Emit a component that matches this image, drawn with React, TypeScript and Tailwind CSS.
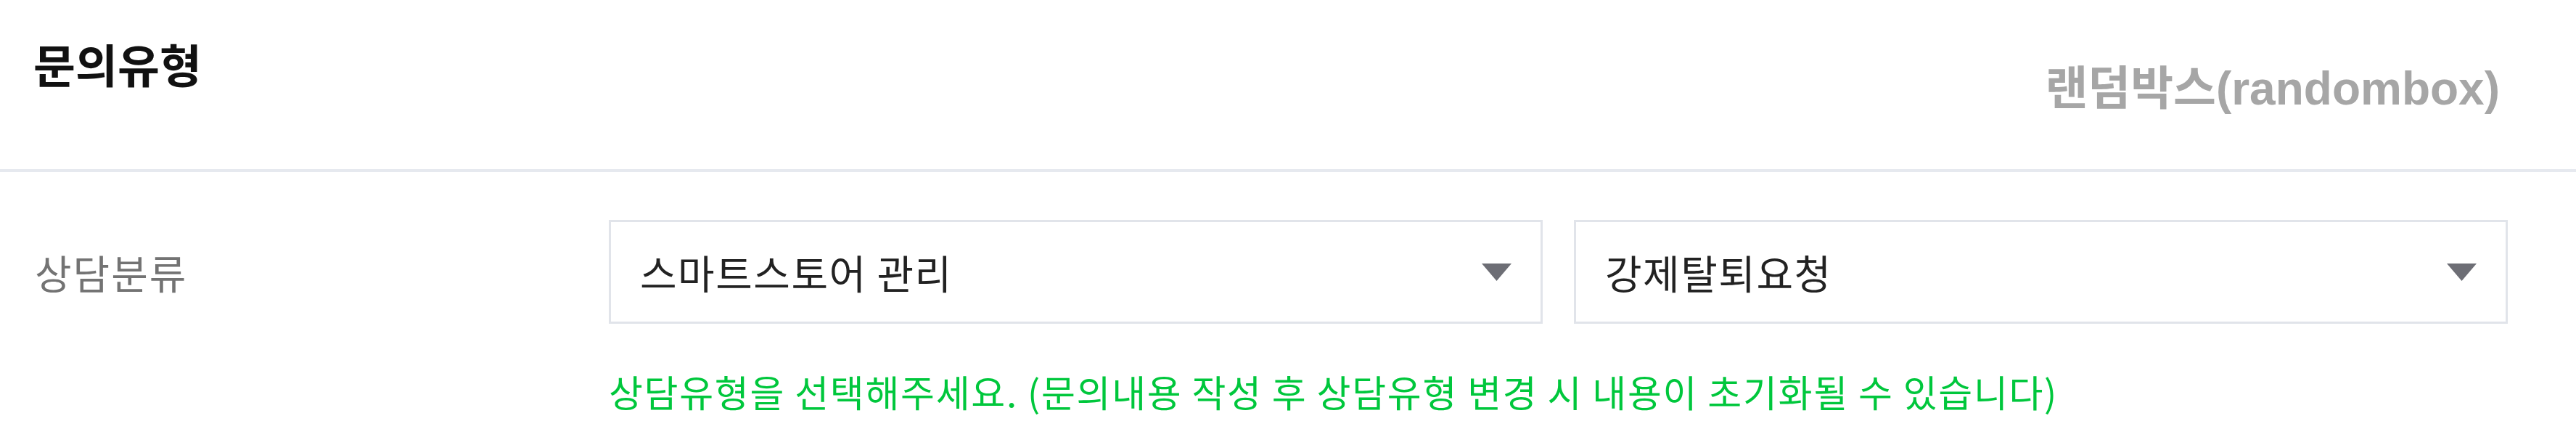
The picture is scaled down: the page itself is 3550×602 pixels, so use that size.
function Caret() {
  return (
    <svg width="41" height="24" viewBox="0 0 41 24" aria-hidden="true">
      <path d="M0 0 H41 L20.5 24 Z" fill="#6d6e75" />
    </svg>
  );
}

function SelectBox({ value }: { value: string }) {
  return (
    <div className="flex h-[143px] w-[1287px] items-center justify-between border-[3px] border-[#e1e4ea] bg-white pl-[40px] pr-[40px]">
      <span className="text-[55px] leading-none tracking-[1.5px] text-[#222222]">{value}</span>
      <Caret />
    </div>
  );
}

export default function App() {
  return (
    <div className="h-[602px] w-[3550px] bg-white font-['Noto_Sans_CJK_KR','Noto_Sans',sans-serif]">
      <div className="flex h-[237px] items-start justify-between border-b-[4px] border-[#e6e9ef]">
        <h1 className="pl-[46px] pt-[55px] text-[63px] font-bold leading-none text-[#111111]">
          문의유형
        </h1>
        <div className="pr-[105px] pt-[90px] font-['Liberation_Sans','Noto_Sans_CJK_KR',sans-serif] text-[64px] font-bold leading-none text-[#a6a6a6]">
          랜덤박스(randombox)
        </div>
      </div>

      <div className="flex pt-[66px]">
        <div className="flex h-[143px] w-[839px] items-center pl-[48px] text-[55px] leading-none tracking-[2px] text-[#737373]">
          상담분류
        </div>
        <div className="flex flex-col">
          <div className="flex gap-[43px]">
            <SelectBox value="스마트스토어 관리" />
            <SelectBox value="강제탈퇴요청" />
          </div>
          <p className="mt-[68px] text-[51px] leading-none tracking-[1.7px] text-[#00c73c]">
            상담유형을 선택해주세요. (문의내용 작성 후 상담유형 변경 시 내용이 초기화될 수 있습니다)
          </p>
        </div>
      </div>
    </div>
  );
}
